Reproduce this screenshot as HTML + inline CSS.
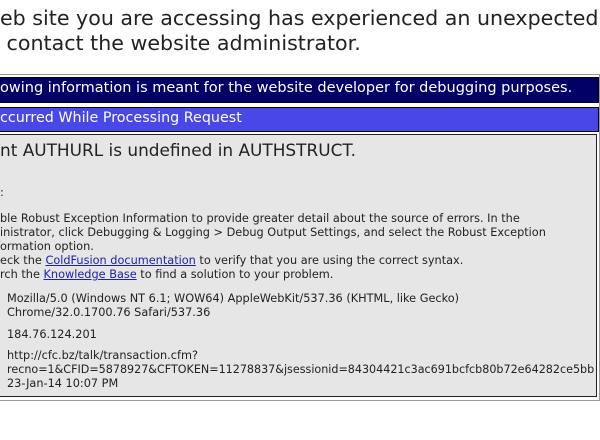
<!DOCTYPE html>
<html><head><style>
body{margin:0;width:600px;height:440px;background:#fff;position:relative;overflow:hidden;font-family:"DejaVu Sans","Liberation Sans",sans-serif;}
.a{position:absolute;white-space:nowrap;}
.p{position:absolute;right:100%;}
.s{font-size:11.3px;color:#222;}
a{color:#2020b0;text-decoration:underline;}
</style></head><body>
<div class="a" style="left:0;top:6px;font-size:20.6px;color:#222;"><span class="p">The w</span>eb site you are accessing has experienced an unexpected</div>
<div class="a" style="left:0;top:31px;font-size:20.6px;color:#222;"><span class="p">Please</span>&nbsp;contact the website administrator.</div>

<div class="a" style="left:-10px;top:74px;width:608px;height:325px;border:1px solid #999;"></div>
<div class="a" style="left:-10px;top:77px;width:607px;height:24px;background:#000066;border:1px solid #000;"></div>
<div class="a" style="left:0;top:80px;font-size:14.5px;color:#fff;"><span class="p">The foll</span>owing information is meant for the website developer for debugging purposes.</div>
<div class="a" style="left:-10px;top:107px;width:607px;height:23px;background:#4848e8;border:1px solid #000;"></div>
<div class="a" style="left:0;top:110px;font-size:14.3px;color:#fff;"><span class="p">Error O</span>ccurred While Processing Request</div>
<div class="a" style="left:-10px;top:134px;width:605px;height:261px;background:#e6e6e6;border:1px solid #222;"></div>

<div class="a" style="left:0;top:140px;font-size:16.9px;color:#222;"><span class="p">Eleme</span>nt AUTHURL is undefined in AUTHSTRUCT.</div>
<div class="a s" style="left:0;top:186px;"><span class="p">Resources</span>:</div>
<div class="a s" style="left:0;top:212px;"><span class="p">Ena</span>ble Robust Exception Information to provide greater detail about the source of errors. In the</div>
<div class="a s" style="left:0;top:226px;"><span class="p">Adm</span>inistrator, click Debugging &amp; Logging &gt; Debug Output Settings, and select the Robust Exception</div>
<div class="a s" style="left:0;top:240px;"><span class="p">Inf</span>ormation option.</div>
<div class="a s" style="left:0;top:254px;"><span class="p">Ch</span>eck the <a>ColdFusion documentation</a> to verify that you are using the correct syntax.</div>
<div class="a s" style="left:0;top:268px;"><span class="p">Sea</span>rch the <a>Knowledge Base</a> to find a solution to your problem.</div>
<div class="a s" style="left:7px;top:292px;">Mozilla/5.0 (Windows NT 6.1; WOW64) AppleWebKit/537.36 (KHTML, like Gecko)</div>
<div class="a s" style="left:7px;top:306px;">Chrome/32.0.1700.76 Safari/537.36</div>
<div class="a s" style="left:7px;top:328px;">184.76.124.201</div>
<div class="a s" style="left:7px;top:349px;">http://cfc.bz/talk/transaction.cfm?</div>
<div class="a s" style="left:7px;top:363px;font-size:11.15px;">recno=1&amp;CFID=5878927&amp;CFTOKEN=11278837&amp;jsessionid=84304421c3ac691bcfcb80b72e64282ce5bb</div>
<div class="a s" style="left:7px;top:377px;">23-Jan-14 10:07 PM</div>
</body></html>
